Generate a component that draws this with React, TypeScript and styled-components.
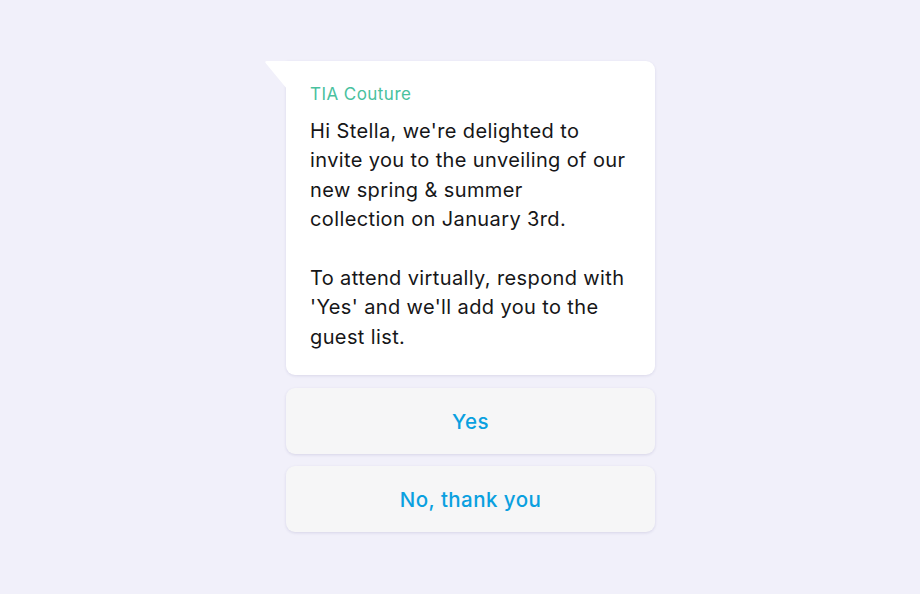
import styled, { createGlobalStyle } from 'styled-components';

const GlobalStyle = createGlobalStyle`
  html, body {
    margin: 0;
    padding: 0;
    background-color: #f1f0fa;
  }
  body {
    font-family: Inter, "Liberation Sans", Arial, sans-serif;
    -webkit-font-smoothing: antialiased;
  }
`;

// Styled components
const Page = styled.div`
  min-height: 594px;
  display: flex;
  justify-content: center;
  padding: 61px 0 0 21px;
  box-sizing: border-box;
`;

const Column = styled.div`
  width: 369px;
  display: flex;
  flex-direction: column;
  gap: 13px;
`;

const Bubble = styled.div`
  position: relative;
  background-color: #fff;
  border-radius: 0 9px 9px 9px;
  padding: 22px 24px 23px 24px;
  box-shadow: 0 1px 3px rgba(60, 50, 120, 0.12);
`;

const Tail = styled.svg`
  position: absolute;
  top: 0;
  left: -22px;
  width: 23px;
  height: 28px;
`;

const Sender = styled.div`
  color: #49c19e;
  font-size: 17px;
  line-height: 22px;
  letter-spacing: 0.45px;
  margin-bottom: 12px;
`;

const Message = styled.p`
  margin: 0;
  color: #161618;
  font-size: 20px;
  line-height: 29.4px;
  letter-spacing: 0.38px;
  white-space: pre-line;
`;

const Replies = styled.div`
  display: flex;
  flex-direction: column;
  gap: 12px;
`;

const Reply = styled.button`
  height: 66px;
  border: none;
  border-radius: 9px;
  background-color: #f6f6f7;
  box-shadow: 0 1px 3px rgba(60, 50, 120, 0.14);
  color: #0aa0e0;
  font-family: Inter, "Liberation Sans", Arial, sans-serif;
  font-size: 20.5px;
  font-weight: 500;
  letter-spacing: 0.45px;
  cursor: pointer;
`;

const replies = ['Yes', 'No, thank you'];

export default function App() {
  return (
    <>
      <GlobalStyle />
      <Page>
        <Column>
          <Bubble>
            <Tail viewBox="0 0 23 28">
              <path d="M23 0 L3 0 Q0 0 2 2.5 L23 28 Z" fill="#fff" />
            </Tail>
            <Sender>TIA Couture</Sender>
            <Message>
              {"Hi Stella, we're delighted to\ninvite you to the unveiling of our\nnew spring & summer\ncollection on January 3rd.\n\nTo attend virtually, respond with\n'Yes' and we'll add you to the\nguest list."}
            </Message>
          </Bubble>
          <Replies>
            {replies.map((r) => (
              <Reply key={r}>{r}</Reply>
            ))}
          </Replies>
        </Column>
      </Page>
    </>
  );
}
